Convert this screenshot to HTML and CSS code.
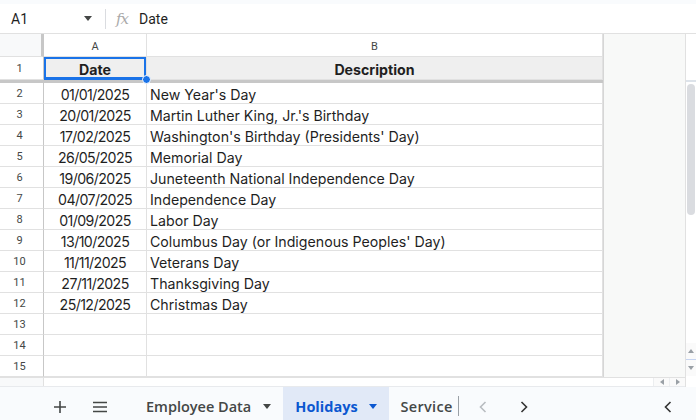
FILE: index.html
```html
<!DOCTYPE html>
<html>
<head>
<meta charset="utf-8">
<link rel="stylesheet" href="styles.css">
</head>
<body>
<div class="app">
  <div class="strip"></div>
  <div class="formula">
    <div class="namebox">A1</div>
    <div class="namearrow"></div>
    <div class="fsep"></div>
    <div class="fx">fx</div>
    <div class="fval">Date</div>
  </div>
  <div class="sheet">
    <div class="grid">
      <div class="row hdr">
        <div class="rn corner"></div>
        <div class="c ca">A</div>
        <div class="c cb">B</div>
        <div class="c extra"></div>
      </div>
      <div class="row r1">
        <div class="rn">1</div>
        <div class="c ca sel">Date<span class="dot"></span></div>
        <div class="c cb bold">Description</div>
        <div class="c extra"></div>
      </div>
      <div class="row freeze">
        <div class="rn"></div>
        <div class="c ca"></div>
        <div class="c cb"></div>
        <div class="c extra"></div>
      </div>
      <div class="row"><div class="rn">2</div><div class="c ca">01/01/2025</div><div class="c cb">New Year's Day</div><div class="c extra"></div></div>
      <div class="row"><div class="rn">3</div><div class="c ca">20/01/2025</div><div class="c cb">Martin Luther King, Jr.'s Birthday</div><div class="c extra"></div></div>
      <div class="row"><div class="rn">4</div><div class="c ca">17/02/2025</div><div class="c cb">Washington's Birthday (Presidents' Day)</div><div class="c extra"></div></div>
      <div class="row"><div class="rn">5</div><div class="c ca">26/05/2025</div><div class="c cb">Memorial Day</div><div class="c extra"></div></div>
      <div class="row"><div class="rn">6</div><div class="c ca">19/06/2025</div><div class="c cb">Juneteenth National Independence Day</div><div class="c extra"></div></div>
      <div class="row"><div class="rn">7</div><div class="c ca">04/07/2025</div><div class="c cb">Independence Day</div><div class="c extra"></div></div>
      <div class="row"><div class="rn">8</div><div class="c ca">01/09/2025</div><div class="c cb">Labor Day</div><div class="c extra"></div></div>
      <div class="row"><div class="rn">9</div><div class="c ca">13/10/2025</div><div class="c cb">Columbus Day (or Indigenous Peoples' Day)</div><div class="c extra"></div></div>
      <div class="row"><div class="rn">10</div><div class="c ca">11/11/2025</div><div class="c cb">Veterans Day</div><div class="c extra"></div></div>
      <div class="row"><div class="rn">11</div><div class="c ca">27/11/2025</div><div class="c cb">Thanksgiving Day</div><div class="c extra"></div></div>
      <div class="row"><div class="rn">12</div><div class="c ca">25/12/2025</div><div class="c cb">Christmas Day</div><div class="c extra"></div></div>
      <div class="row"><div class="rn">13</div><div class="c ca"></div><div class="c cb"></div><div class="c extra"></div></div>
      <div class="row"><div class="rn">14</div><div class="c ca"></div><div class="c cb"></div><div class="c extra"></div></div>
      <div class="row"><div class="rn">15</div><div class="c ca"></div><div class="c cb"></div><div class="c extra"></div></div>
      <div class="hscroll">
        <div class="hs-rn"></div>
        <div class="hs-track"></div>
        <div class="hs-btn"><span class="tri-l"></span></div>
        <div class="hs-btn"><span class="tri-r"></span></div>
      </div>
    </div>
    <div class="vscroll">
      <div class="vs-top"></div>
      <div class="vs-thumb"></div>
      <div class="vs-fill"></div>
      <div class="vs-btn"><span class="tri-u"></span></div>
      <div class="vs-mid"></div>
      <div class="vs-btn"><span class="tri-d"></span></div>
      <div class="vs-end"></div>
    </div>
  </div>
  <div class="tabs">
    <div class="tbtn plus">
      <svg width="14" height="14" viewBox="0 0 14 14"><path d="M7 1v12M1 7h12" stroke="#444746" stroke-width="1.6" fill="none"/></svg>
    </div>
    <div class="tbtn menu">
      <svg width="16" height="12" viewBox="0 0 16 12"><path d="M1 1.5h14M1 6h14M1 10.5h14" stroke="#444746" stroke-width="1.7" fill="none"/></svg>
    </div>
    <div class="tab first">Employee Data<span class="tarrow"></span></div>
    <div class="tab active">Holidays<span class="tarrow"></span></div>
    <div class="tab last">Service</div>
    <div class="tsep"></div>
    <div class="nav prev">
      <svg width="10" height="14" viewBox="0 0 10 14"><path d="M7.5 2L2.5 7l5 5" stroke="#b8bcc0" stroke-width="1.6" fill="none"/></svg>
    </div>
    <div class="nav next">
      <svg width="10" height="14" viewBox="0 0 10 14"><path d="M2.5 2l5 5-5 5" stroke="#333" stroke-width="1.6" fill="none"/></svg>
    </div>
    <div class="tspace"></div>
    <div class="nav end">
      <svg width="10" height="14" viewBox="0 0 10 14"><path d="M7.5 2L2.5 7l5 5" stroke="#333" stroke-width="1.6" fill="none"/></svg>
    </div>
  </div>
</div>
</body>
</html>
```

FILE: styles.css
```css
* { box-sizing: border-box; }
html, body { margin: 0; padding: 0; }
body { width: 696px; height: 420px; overflow: hidden; background: #fff; font-family: Roboto, "Liberation Sans", Arial, sans-serif; }
.app { width: 696px; height: 420px; display: flex; flex-direction: column; }
.strip { height: 4px; background: #f9fbfd; }
.formula { height: 30px; display: flex; align-items: center; border-bottom: 1px solid #e1e1e1; font-size: 14px; color: #1f1f1f; }
.namebox { width: 84px; padding-left: 11px; }
.namearrow { width: 0; height: 0; border-left: 4.5px solid transparent; border-right: 4.5px solid transparent; border-top: 5px solid #444746; margin-right: 13px; }
.fsep { width: 1px; height: 20px; background: #dadce0; margin-right: 10px; }
.fx { font-family: "DejaVu Serif", "Liberation Serif", serif; font-style: italic; font-size: 15px; color: #aaaaaa; width: 22px; letter-spacing: -1px; }
.fval { padding-left: 1px; }
.sheet { display: flex; height: 353px; }
.grid { width: 685px; display: flex; flex-direction: column; }
.row { display: flex; height: 21px; }
.rn { width: 44px; flex: none; border-right: 1px solid #c7c7c7; border-bottom: 1px solid #e1e1e1; font-size: 11px; color: #444746; display: flex; align-items: center; justify-content: center; padding-right: 4px; }
.c { flex: none; border-right: 1px solid #e1e1e1; border-bottom: 1px solid #e1e1e1; font-family: Inter, "Open Sans", sans-serif; font-size: 14.2px; color: #1f1f1f; display: flex; align-items: center; white-space: nowrap; }
.ca { width: 103px; justify-content: center; padding-top: 2px; letter-spacing: -0.6px; }
.cb { width: 456px; padding-left: 3px; padding-top: 2px; }
.extra { width: 82px; background: #f8f9f8; border-right: none; border-left: 1px solid #d6d6d6; border-bottom: none; }
.hdr { height: 23px; }
.hdr .c { font-family: Roboto, "Liberation Sans", sans-serif; font-size: 11px; color: #444746; justify-content: center; letter-spacing: 0; }
.hdr .cb { padding-left: 0; }
.corner { background: #f8f9fa; border-right: 3px solid #c7c7c7; }
.r1 { height: 23px; }
.r1 .ca, .r1 .cb { background: #efefef; font-weight: 700; justify-content: center; padding-left: 0; letter-spacing: 0; }
.bold { font-weight: 700; }
.sel { position: relative; box-shadow: inset 0 0 0 2px #1a73e8; }
.sel { border-bottom-color: #1a73e8; }
.dot { position: absolute; right: -5px; bottom: -5px; width: 9px; height: 9px; border-radius: 50%; background: #1a73e8; border: 1px solid #fff; z-index: 2; }
.freeze { height: 3px; }
.freeze .rn, .freeze .ca, .freeze .cb { background: #c7c7c7; border: none; }
.freeze .extra { background: #f8f9f8; }
.hscroll { height: 10px; display: flex; border-top: 1px solid #e1e1e1; border-bottom: 1px solid #e8eaed; }
.hs-rn { width: 44px; background: #f8f9fa; border-right: 1px solid #e1e1e1; }
.hs-track { flex: 1; background: #fff; }
.hs-btn { width: 16px; display: flex; align-items: center; justify-content: center; border-left: 1px solid #eceef0; background: #fafafa; }
.tri-l { width: 0; height: 0; border-top: 3px solid transparent; border-bottom: 3px solid transparent; border-right: 4px solid #9aa0a6; }
.tri-r { width: 0; height: 0; border-top: 3px solid transparent; border-bottom: 3px solid transparent; border-left: 4px solid #9aa0a6; }
.vscroll { width: 11px; display: flex; flex-direction: column; border-left: 1px solid #e1e1e1; background: #fff; }
.vs-top { height: 48px; background: #fff; border-bottom: 2px solid #dde3ea; }
.vs-thumb { height: 131px; margin: 2px 1px 0 1px; background: #dadce0; border-radius: 5px; }
.vs-fill { flex: 1; }
.vs-btn { height: 16px; display: flex; align-items: center; justify-content: center; background: #fafafa; }
.vs-mid { height: 1px; background: #c6d4f0; }
.vs-end { height: 11px; }
.tri-u { width: 0; height: 0; border-left: 3px solid transparent; border-right: 3px solid transparent; border-bottom: 4px solid #9aa0a6; }
.tri-d { width: 0; height: 0; border-left: 3px solid transparent; border-right: 3px solid transparent; border-top: 4px solid #9aa0a6; }
.tabs { height: 33px; background: #f9fbfd; display: flex; align-items: stretch; }
.tbtn { display: flex; align-items: center; justify-content: center; padding-top: 6px; }
.plus { width: 28px; margin-left: 46px; }
.menu { width: 28px; margin-left: 12px; }
.tab { display: flex; align-items: center; font-family: "Open Sans", sans-serif; font-size: 14.5px; font-weight: 600; color: #444746; padding-top: 6px; }
.first { margin-left: 32px; padding-right: 12px; }
.tarrow { width: 0; height: 0; border-left: 4.5px solid transparent; border-right: 4.5px solid transparent; border-top: 5px solid #444746; margin-left: 12px; }
.active { background: #e1e9f7; color: #0b57d0; padding-left: 12px; padding-right: 12px; font-weight: 700; }
.active .tarrow { border-top-color: #0b57d0; margin-left: 11px; }
.last { padding-left: 12px; letter-spacing: 0.3px; }
.tsep { width: 1.5px; background: #9aa0a6; margin: 9px 0 4px 5px; }
.nav { display: flex; align-items: center; justify-content: center; width: 20px; padding-top: 6px; }
.prev { margin-left: 14px; }
.next { margin-left: 21px; }
.tspace { flex: 1; }
.end { margin-right: 18px; }
```
